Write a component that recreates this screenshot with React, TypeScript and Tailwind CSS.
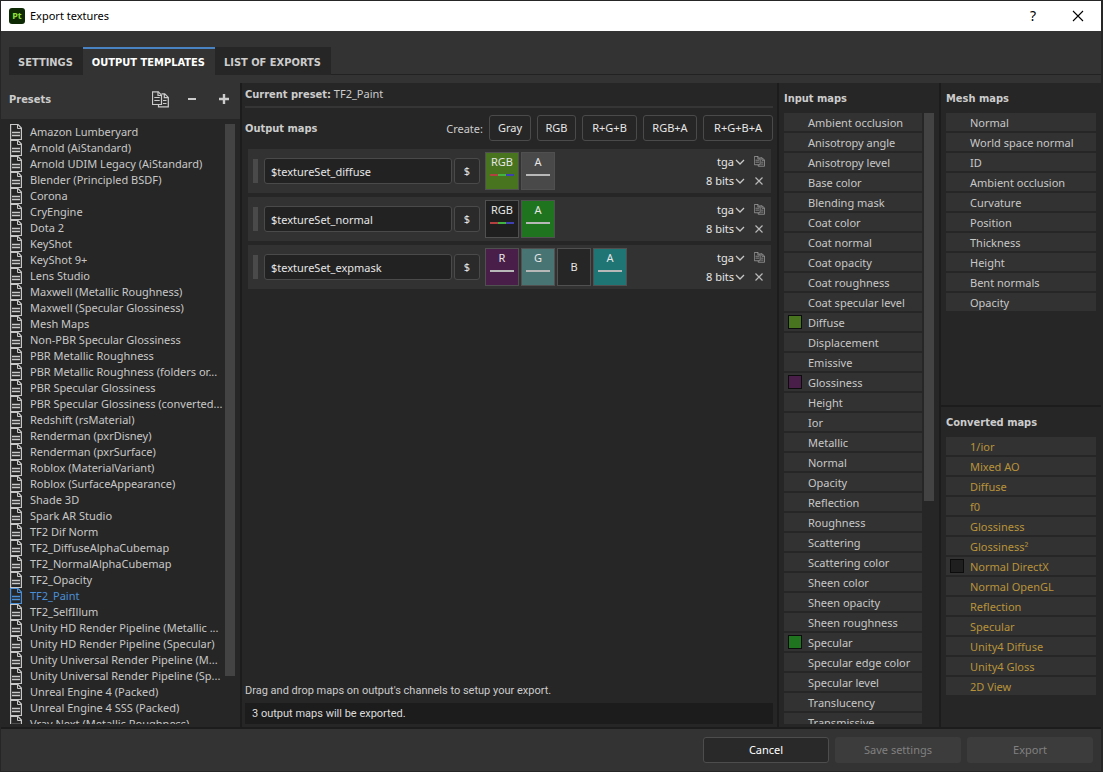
import { useState } from 'react'
import type { ReactNode } from 'react'

const presets = [
  'Amazon Lumberyard',
  'Arnold (AiStandard)',
  'Arnold UDIM Legacy (AiStandard)',
  'Blender (Principled BSDF)',
  'Corona',
  'CryEngine',
  'Dota 2',
  'KeyShot',
  'KeyShot 9+',
  'Lens Studio',
  'Maxwell (Metallic Roughness)',
  'Maxwell (Specular Glossiness)',
  'Mesh Maps',
  'Non-PBR Specular Glossiness',
  'PBR Metallic Roughness',
  'PBR Metallic Roughness (folders or...',
  'PBR Specular Glossiness',
  'PBR Specular Glossiness (converted...',
  'Redshift (rsMaterial)',
  'Renderman (pxrDisney)',
  'Renderman (pxrSurface)',
  'Roblox (MaterialVariant)',
  'Roblox (SurfaceAppearance)',
  'Shade 3D',
  'Spark AR Studio',
  'TF2 Dif Norm',
  'TF2_DiffuseAlphaCubemap',
  'TF2_NormalAlphaCubemap',
  'TF2_Opacity',
  'TF2_Paint',
  'TF2_SelfIllum',
  'Unity HD Render Pipeline (Metallic ...',
  'Unity HD Render Pipeline (Specular)',
  'Unity Universal Render Pipeline (M...',
  'Unity Universal Render Pipeline (Sp...',
  'Unreal Engine 4 (Packed)',
  'Unreal Engine 4 SSS (Packed)',
  'Vray Next (Metallic Roughness)'
]

type MapItem = { name: string; swatch?: string }

const inputMaps: MapItem[] = [
  { name: 'Ambient occlusion' },
  { name: 'Anisotropy angle' },
  { name: 'Anisotropy level' },
  { name: 'Base color' },
  { name: 'Blending mask' },
  { name: 'Coat color' },
  { name: 'Coat normal' },
  { name: 'Coat opacity' },
  { name: 'Coat roughness' },
  { name: 'Coat specular level' },
  { name: 'Diffuse', swatch: 'bg-[#49741f]' },
  { name: 'Displacement' },
  { name: 'Emissive' },
  { name: 'Glossiness', swatch: 'bg-[#491f49]' },
  { name: 'Height' },
  { name: 'Ior' },
  { name: 'Metallic' },
  { name: 'Normal' },
  { name: 'Opacity' },
  { name: 'Reflection' },
  { name: 'Roughness' },
  { name: 'Scattering' },
  { name: 'Scattering color' },
  { name: 'Sheen color' },
  { name: 'Sheen opacity' },
  { name: 'Sheen roughness' },
  { name: 'Specular', swatch: 'bg-[#1f741f]' },
  { name: 'Specular edge color' },
  { name: 'Specular level' },
  { name: 'Translucency' },
  { name: 'Transmissive' }
]

const meshMaps: MapItem[] = [
  { name: 'Normal' },
  { name: 'World space normal' },
  { name: 'ID' },
  { name: 'Ambient occlusion' },
  { name: 'Curvature' },
  { name: 'Position' },
  { name: 'Thickness' },
  { name: 'Height' },
  { name: 'Bent normals' },
  { name: 'Opacity' }
]

const convertedMaps: MapItem[] = [
  { name: '1/ior' },
  { name: 'Mixed AO' },
  { name: 'Diffuse' },
  { name: 'f0' },
  { name: 'Glossiness' },
  { name: 'Glossiness²' },
  { name: 'Normal DirectX', swatch: 'bg-[#1f1f1f]' },
  { name: 'Normal OpenGL' },
  { name: 'Reflection' },
  { name: 'Specular' },
  { name: 'Unity4 Diffuse' },
  { name: 'Unity4 Gloss' },
  { name: '2D View' }
]

type Channel = { label: string; color: string; bar: 'rgb' | 'gray' | 'none' }

const outputs: { name: string; channels: Channel[] }[] = [
  {
    name: '$textureSet_diffuse',
    channels: [
      { label: 'RGB', color: 'bg-[#49741f]', bar: 'rgb' },
      { label: 'A', color: 'bg-[#494949]', bar: 'gray' }
    ]
  },
  {
    name: '$textureSet_normal',
    channels: [
      { label: 'RGB', color: 'bg-[#1f1f1f]', bar: 'rgb' },
      { label: 'A', color: 'bg-[#1f741f]', bar: 'gray' }
    ]
  },
  {
    name: '$textureSet_expmask',
    channels: [
      { label: 'R', color: 'bg-[#491f49]', bar: 'gray' },
      { label: 'G', color: 'bg-[#497474]', bar: 'gray' },
      { label: 'B', color: 'bg-[#262626]', bar: 'none' },
      { label: 'A', color: 'bg-[#1f7474]', bar: 'gray' }
    ]
  }
]

const createButtons = [
  { label: 'Gray', width: 'w-[42px]' },
  { label: 'RGB', width: 'w-[39px]' },
  { label: 'R+G+B', width: 'w-[55px]' },
  { label: 'RGB+A', width: 'w-[54px]' },
  { label: 'R+G+B+A', width: 'w-[70px]' }
]

const boldFont = "font-['DejaVu_Sans_Condensed','Noto_Sans',sans-serif] font-bold"

function FileIcon() {
  return (
    <svg width="12" height="16" viewBox="0 0 12 16" fill="none" stroke="currentColor" className="shrink-0">
      <path d="M.6.5H8L11.4 4v11.5H.6z" strokeWidth="1.2" />
      <path d="M7.5.5v4h4" />
      <path d="M2 8.5h8M2 11.5h8" strokeWidth="1.3" />
    </svg>
  )
}

function CopyIcon({ size = 17 }: { size?: number }) {
  return (
    <svg width={size} height={size} viewBox="0 0 17 17" fill="none" stroke="currentColor" strokeWidth="1.2">
      <path d="M9.5 13.5h-9V.8h5.8l3.2 3.4z" />
      <path d="M6 .8v3.7h3.5M2.3 6.5h5.4M2.3 9.5h5.4" />
      <path d="M9.5 2.8h3.2l3.6 3.6v9.4H6.5v-2.3M12.3 3v3.6h4M11 9.5h3.5M11 12.5h3.5" />
    </svg>
  )
}

function Heading({ children }: { children: ReactNode }) {
  return <h2 className={`h-[30px] shrink-0 leading-8 ${boldFont}`}>{children}</h2>
}

function Tab({ active, onClick, children }: { active: boolean; onClick: () => void; children: ReactNode }) {
  return (
    <button
      role="tab"
      aria-selected={active}
      onClick={onClick}
      className={`h-7 border-t-2 pl-[9px] pr-2.5 pt-0.5 ${boldFont} ${
        active ? 'border-[#4a83c4] bg-[#333333] text-white' : 'border-[#262626] bg-[#262626] text-[#cccccc]'
      }`}
    >
      {children}
    </button>
  )
}

function MapList({ items, amber }: { items: MapItem[]; amber?: boolean }) {
  return (
    <ul className={`flex flex-1 flex-col gap-0.5 ${amber ? 'text-[#b8923a]' : 'text-[#c8c8c8]'}`}>
      {items.map((item) => (
        <li key={item.name} className="flex h-[18px] shrink-0 items-center gap-1.5 bg-[#323232] pl-1">
          <span className={`size-3.5 ${item.swatch ? `border border-[#0c0c0c] ${item.swatch}` : ''}`} />
          <span className="whitespace-nowrap pt-0.5 leading-4">{item.name}</span>
        </li>
      ))}
    </ul>
  )
}

function ChannelTile({ channel }: { channel: Channel }) {
  return (
    <div className={`flex h-[38px] w-[34px] flex-col items-center border border-[#505050] ${channel.color}`}>
      {channel.bar === 'none' ? (
        <span className="flex flex-1 items-center">{channel.label}</span>
      ) : (
        <span className="h-[21px] leading-[18px]">{channel.label}</span>
      )}
      {channel.bar === 'gray' && <span className="h-0.5 w-6 bg-[#b8b8b8]" />}
      {channel.bar === 'rgb' && (
        <span className="flex h-0.5 w-6">
          <span className="flex-1 bg-[#b34040]" />
          <span className="flex-1 bg-[#40b340]" />
          <span className="flex-1 bg-[#4040b3]" />
        </span>
      )}
    </div>
  )
}

function Dropdown({ label, options }: { label: string; options: string[] }) {
  return (
    <label className="flex items-center">
      <select aria-label={label} className="w-12 appearance-none bg-transparent text-right outline-none [text-align-last:right]">
        {options.map((option) => (
          <option key={option}>{option}</option>
        ))}
      </select>
      <svg width="12" height="8" viewBox="0 0 12 8" fill="none" stroke="#c8c8c8" strokeWidth="1.3">
        <path d="M2 2l4 4 4-4" />
      </svg>
    </label>
  )
}

function OutputRow({ name, channels }: { name: string; channels: Channel[] }) {
  const [value, setValue] = useState(name)

  return (
    <div className="flex h-11 items-center bg-[#323232] pl-[5px] pr-[5px] text-[#e6e6e6]">
      <span className="mr-1.5 h-6 w-[5px] bg-[#4a4a4a]" />
      <input
        aria-label="Output map name"
        value={value}
        onChange={(event) => setValue(event.target.value)}
        className="h-[26px] w-[188px] rounded-[3px] border border-[#4a4a4a] bg-[#222222] px-1.5 outline-none"
      />
      <button className="ml-0.5 h-[26px] w-[26px] rounded-[3px] border border-[#4a4a4a] bg-[#2a2a2a]">$</button>
      <div className="ml-[5px] flex gap-0.5">
        {channels.map((channel, i) => (
          <ChannelTile key={i} channel={channel} />
        ))}
      </div>
      <div className="ml-auto grid grid-cols-[auto_12px] items-center gap-x-2 gap-y-[3px] leading-4">
        <Dropdown label="File type" options={['tga', 'png', 'tiff']} />
        <button aria-label="Duplicate output" className="text-[#a0a0a0]">
          <CopyIcon size={11} />
        </button>
        <Dropdown label="Bit depth" options={['8 bits', '16 bits']} />
        <button aria-label="Remove output">
          <svg width="10" height="10" viewBox="0 0 10 10" stroke="#b8b8b8" strokeWidth="1.2">
            <path d="M1.5 1.5l7 7M8.5 1.5l-7 7" />
          </svg>
        </button>
      </div>
    </div>
  )
}

function App() {
  const [tab, setTab] = useState('OUTPUT TEMPLATES')
  const [selected, setSelected] = useState('TF2_Paint')

  return (
    <div className="flex h-screen flex-col border border-r-2 border-[#262626] bg-[#333333] font-['Noto_Sans',sans-serif] text-[11px] text-[#cccccc]">
      <header className="flex h-[30px] shrink-0 items-center bg-white pl-2 pr-[17px] text-black">
        <svg width="16" height="16" viewBox="0 0 16 16" aria-hidden="true">
          <rect width="16" height="16" rx="3" fill="#0e2a05" />
          <text x="8" y="11" textAnchor="middle" fontSize="9" fontWeight="700" fill="#8fe03c">
            Pt
          </text>
        </svg>
        <h1 className="ml-[5px]">Export textures</h1>
        <button aria-label="Help" className="ml-auto text-sm">
          ?
        </button>
        <button aria-label="Close" className="ml-9">
          <svg width="12" height="12" viewBox="0 0 12 12" stroke="#000" strokeWidth="1.1">
            <path d="M1 1l10 10M11 1L1 11" />
          </svg>
        </button>
      </header>

      <nav role="tablist" className="mt-4 flex shrink-0 items-start pl-2">
        {['SETTINGS', 'OUTPUT TEMPLATES', 'LIST OF EXPORTS'].map((name) => (
          <Tab key={name} active={tab === name} onClick={() => setTab(name)}>
            {name}
          </Tab>
        ))}
        <span className="flex-1 self-end border-b border-[#222222]" />
      </nav>

      <main className="mt-2 flex min-h-0 flex-1 border-b-2 border-[#1c1c1c] bg-[#262626]">
        <section className="flex w-[241px] shrink-0 flex-col border-r-2 border-[#1c1c1c] pb-[3px]">
          <div className="flex h-9 shrink-0 items-center bg-[#333333] pb-1 pl-2 pr-2.5">
            <h2 className={`pt-0.5 ${boldFont}`}>Presets</h2>
            <button aria-label="Duplicate preset" className="ml-auto">
              <CopyIcon />
            </button>
            <button aria-label="Remove preset" className="ml-[18px]">
              <svg width="10" height="10" viewBox="0 0 10 10" stroke="currentColor" strokeWidth="2">
                <path d="M1 5h8" />
              </svg>
            </button>
            <button aria-label="Add preset" className="ml-[21px]">
              <svg width="12" height="12" viewBox="0 0 12 12" stroke="currentColor" strokeWidth="2.4">
                <path d="M1 6h10M6 1v10" />
              </svg>
            </button>
          </div>
          <div className="mt-[5px] flex min-h-0 flex-1 overflow-hidden pl-[9px] pr-[5px]">
            <ul className="flex min-w-0 flex-1 flex-col">
              {presets.map((preset) => (
                <li key={preset} className="h-4 shrink-0">
                  <button
                    onClick={() => setSelected(preset)}
                    className={`flex h-4 items-center gap-2 whitespace-nowrap leading-4 ${
                      preset === selected ? 'text-[#4a8fd8]' : 'text-[#c8c8c8]'
                    }`}
                  >
                    <FileIcon />
                    {preset}
                  </button>
                </li>
              ))}
            </ul>
            <div className="h-[92%] w-2.5 bg-[#434343]" />
          </div>
        </section>

        <section className="flex min-w-0 flex-1 flex-col pb-[3px] pl-[3px] pr-1">
          <p className="h-[23px] leading-[22px]">
            <strong className={boldFont}>Current preset:</strong> TF2_Paint
          </p>
          <hr className="h-0.5 shrink-0 border-0 bg-[#353535]" />
          <div className="mt-[7px] flex items-center gap-1.5">
            <h2 className={`pt-0.5 ${boldFont}`}>Output maps</h2>
            <span className="ml-auto pt-0.5">Create:</span>
            {createButtons.map((button) => (
              <button
                key={button.label}
                className={`h-[26px] rounded-[3px] border border-[#4a4a4a] text-[#e6e6e6] ${button.width}`}
              >
                {button.label}
              </button>
            ))}
          </div>
          <div className="ml-[3px] mr-0.5 mt-2 flex flex-col gap-1">
            {outputs.map((output) => (
              <OutputRow key={output.name} {...output} />
            ))}
          </div>
          <div className="mt-auto font-[Roboto,sans-serif]">
            <p className="leading-6">Drag and drop maps on output's channels to setup your export.</p>
            <p className="bg-[#1c1c1c] pl-[7px] leading-[21px] text-[#dcdcdc]">3 output maps will be exported.</p>
          </div>
        </section>

        <section className="flex w-[164px] shrink-0 flex-col border-x-2 border-[#1c1c1c] px-[5px] pb-[3px]">
          <Heading>Input maps</Heading>
          <div className="flex min-h-0 flex-1 gap-0.5 overflow-hidden">
            <MapList items={inputMaps} />
            <div className="h-[63.5%] w-2.5 bg-[#434343]" />
          </div>
        </section>

        <div className="flex w-[160px] shrink-0 flex-col">
          <section className="h-[324px] border-b-2 border-[#1c1c1c] px-[5px]">
            <Heading>Mesh maps</Heading>
            <MapList items={meshMaps} />
          </section>
          <section className="px-[5px]">
            <Heading>Converted maps</Heading>
            <MapList items={convertedMaps} amber />
          </section>
        </div>
      </main>

      <footer className="flex h-[42px] shrink-0 items-center justify-end gap-1.5 pr-2">
        <button className="h-[26px] w-[126px] rounded-[3px] border border-[#4d4d4d] bg-[#292929] text-white">Cancel</button>
        <button disabled className="h-[26px] w-[126px] rounded-[3px] bg-[#3c3c3c] text-[#808080]">
          Save settings
        </button>
        <button disabled className="h-[26px] w-[126px] rounded-[3px] bg-[#3c3c3c] text-[#808080]">
          Export
        </button>
      </footer>
    </div>
  )
}

export default App
